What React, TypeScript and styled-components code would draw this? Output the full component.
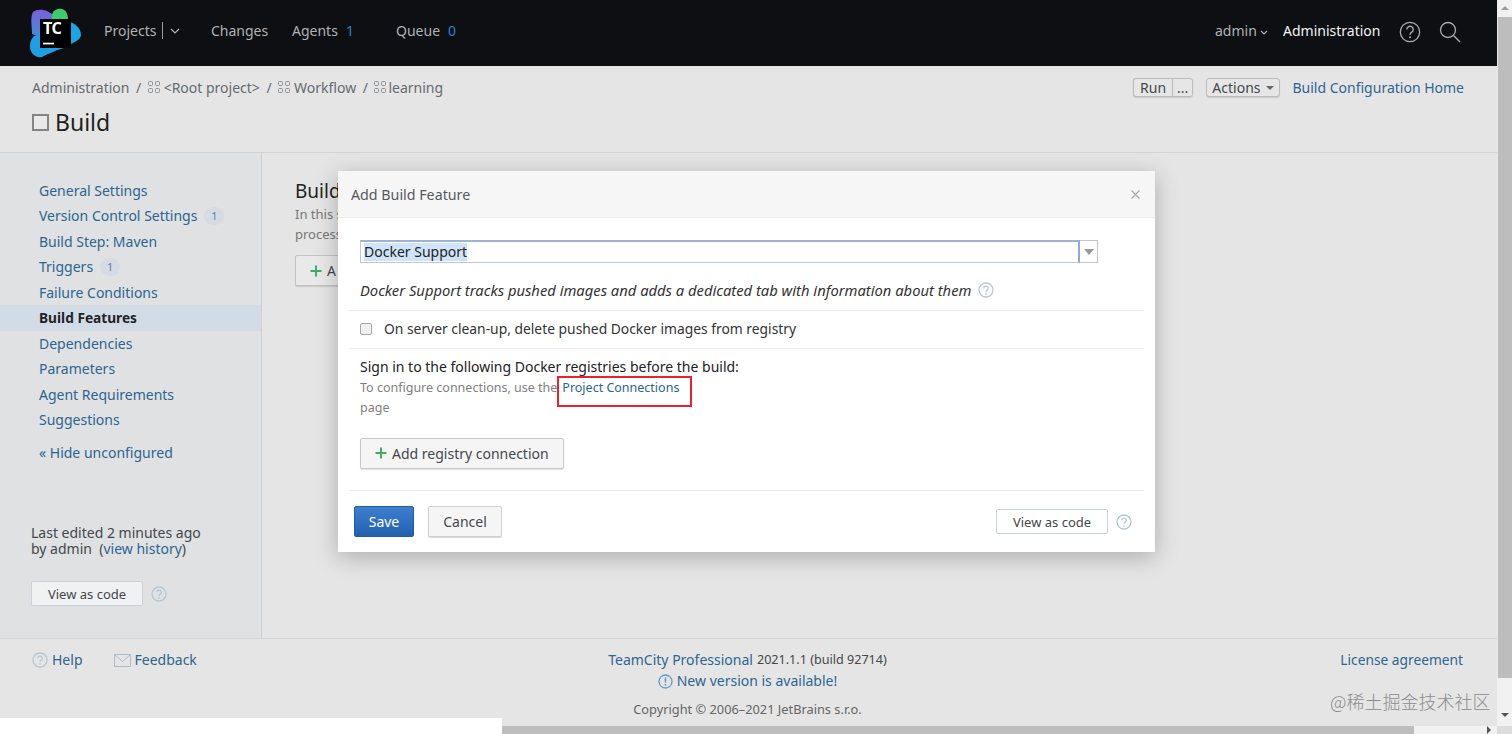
import React from "react";
import styled, { createGlobalStyle } from "styled-components";

const Global = createGlobalStyle`
  html, body { margin: 0; padding: 0; height: 100%; overflow: hidden; background: #e5e5e5; }
  body { font-family: "Noto Sans", "Open Sans", "Liberation Sans", sans-serif; font-size: 14px; color: #333; }
  * { box-sizing: border-box; }
`;

const Screen = styled.div`
  position: relative;
  width: 1512px;
  height: 734px;
  display: flex;
  overflow: hidden;
  background: #e5e5e5;
`;
const Column = styled.div`
  width: 1497px;
  height: 734px;
  display: flex;
  flex-direction: column;
`;
const TopBar = styled.header`
  height: 66px;
  flex: none;
  background: #0d0f13;
  display: flex;
  align-items: center;
  padding: 0 36px 5px 30px;
  color: #b4b6b8;
`;
const Logo = styled.svg`
  width: 52px;
  height: 52px;
  flex: none;
  margin: 7px 22px 0 0;
`;
const NavItem = styled.span<{ $w: number; $light?: boolean }>`
  width: ${(p) => p.$w}px;
  flex: none;
  font-size: 14px;
  line-height: 20px;
  color: ${(p) => (p.$light ? "#f2f2f2" : "#b0b2b4")};
  display: flex;
  align-items: center;
`;
const Count = styled.span`
  color: #2a82d8;
  margin-left: 8px;
  font-size: 14px;
`;
const NavDivider = styled.i`
  width: 1px;
  height: 17px;
  background: #9a9c9e;
  margin: 0 7px 0 6px;
`;
const Spacer = styled.div`
  flex: 1;
`;
const SubHead = styled.div`
  height: 87px;
  flex: none;
  padding: 10px 33px 0 32px;
  border-bottom: 1px solid #d3d4d5;
  background: #e5e5e5;
`;
const CrumbRow = styled.div`
  display: flex;
  align-items: center;
  height: 22px;
`;
const Crumb = styled.span`
  font-size: 14px;
  color: #666b70;
  display: inline-flex;
  align-items: center;
`;
const Slash = styled.span`
  margin: 0 6.5px;
  color: #666b70;
  font-size: 14px;
`;
const TitleRow = styled.div`
  display: flex;
  align-items: center;
  margin-top: 9px;
  height: 30px;
`;
const TitleBox = styled.i`
  width: 17px;
  height: 17px;
  border: 2px solid #848484;
  margin-right: 6px;
  background: #e9e9e9;
`;
const Title = styled.h1`
  margin: 0;
  font-size: 23px;
  line-height: 30px;
  font-weight: 400;
  color: #1f1f1f;
`;
const GroupBtn = styled.span<{ $first?: boolean; $last?: boolean; $ml?: number }>`
  display: inline-flex;
  align-items: center;
  height: 19px;
  padding: 0 ${(p) => (p.$last ? 4 : p.$first ? 6 : 5)}px;
  margin-left: ${(p) => p.$ml ?? 0}px;
  border: 1px solid #bcbcbc;
  border-right-width: ${(p) => (p.$first ? 0 : 1)}px;
  border-radius: ${(p) => (p.$first ? "3px 0 0 3px" : p.$last ? "0 3px 3px 0" : "3px")};
  background: #e6e6e6;
  box-shadow: 0 1px 1px rgba(0, 0, 0, 0.12);
  font-size: 14px;
  color: #44484c;
`;
const DropTri = styled.i`
  width: 0;
  height: 0;
  border: 4px solid transparent;
  border-top: 4px solid #666;
  border-bottom: 0;
  margin-left: 5px;
  margin-top: 1px;
`;
const HeadLink = styled.a`
  color: #2d6591;
  font-size: 14px;
  margin-left: 13px;
`;
const Body = styled.div`
  display: flex;
  flex: none;
  height: 486px;
  border-bottom: 1px solid #d3d4d5;
`;
const Sidebar = styled.aside`
  width: 262px;
  flex: none;
  background: #dfe1e2;
  border-right: 1px solid #cfd1d2;
  display: flex;
  flex-direction: column;
  padding-top: 24.5px;
`;
const SideItem = styled.div<{ $active?: boolean }>`
  height: 25.5px;
  padding-left: 39px;
  display: flex;
  align-items: center;
  font-size: ${(p) => (p.$active ? 13.7 : 14)}px;
  font-weight: ${(p) => (p.$active ? 700 : 400)};
  color: ${(p) => (p.$active ? "#1f2326" : "#2d6591")};
  background: ${(p) => (p.$active ? "#d2dce6" : "transparent")};
`;
const Pill = styled.span`
  width: 20px;
  height: 18px;
  border-radius: 9px;
  background: #d5dbe3;
  color: #65809a;
  font-size: 11px;
  display: inline-flex;
  align-items: center;
  justify-content: center;
  margin-left: 7px;
`;
const HideLink = styled.a`
  color: #2d6591;
  font-size: 14px;
  margin: 7.5px 0 0 39px;
  line-height: 25px;
`;
const EditedNote = styled.div`
  margin: 60px 0 0 31px;
  font-size: 14px;
  line-height: 16px;
  color: #44484c;
`;
const NoteLink = styled.a`
  color: #2d6591;
`;
const CodeRow = styled.div<{ $ml?: number; $mt?: number }>`
  display: flex;
  align-items: center;
  margin-left: ${(p) => p.$ml ?? 0}px;
  margin-top: ${(p) => p.$mt ?? 0}px;
`;
const CodeBtn = styled.span`
  width: 112px;
  height: 25px;
  border: 1px solid #c9d2dc;
  border-radius: 2px;
  background: #f0f1f2;
  display: inline-flex;
  align-items: center;
  justify-content: center;
  font-size: 13px;
  color: #44484c;
`;
const Content = styled.main`
  width: 76px;
  flex: none;
  padding: 25px 0 0 33px;
  overflow: hidden;
`;
const ContentTitle = styled.h2`
  margin: 0;
  font-size: 19px;
  line-height: 26px;
  font-weight: 400;
  color: #222;
  white-space: nowrap;
`;
const ContentText = styled.p`
  margin: 0;
  font-size: 13px;
  line-height: 20px;
  color: #777;
  white-space: nowrap;
`;
const AddBtn = styled.span`
  margin-top: 11px;
  width: 80px;
  height: 31px;
  padding: 0 14px;
  display: inline-flex;
  align-items: center;
  gap: 5px;
  border: 1px solid #c4c4c4;
  border-radius: 2px;
  background: #e9e9e9;
  box-shadow: 0 1px 1px rgba(0, 0, 0, 0.12);
  font-size: 14px;
  color: #44484c;
`;
const Footer = styled.footer`
  flex: none;
  height: 80px;
  display: grid;
  grid-template-columns: 1fr 1fr 1fr;
  padding: 11px 34px 0 32px;
`;
const FootLeft = styled.div`
  display: flex;
  align-items: flex-start;
  gap: 31px;
`;
const FootLink = styled.a<{ $size?: number }>`
  color: #2d6591;
  font-size: ${(p) => p.$size ?? 14}px;
  line-height: 20px;
  display: inline-flex;
  align-items: center;
  gap: 4px;
`;
const FootCenter = styled.div`
  display: flex;
  flex-direction: column;
  align-items: center;
  width: 560px;
  justify-self: center;
`;
const FootLine = styled.div<{ $mt?: number }>`
  margin-top: ${(p) => p.$mt ?? 0}px;
  line-height: 20px;
  font-size: 12.6px;
  color: #44484c;
  display: flex;
  align-items: center;
  gap: 4px;
`;
const Copy = styled.div`
  margin-top: 8px;
  font-size: 12.8px;
  line-height: 20px;
  color: #666;
`;
const FootRight = styled.div`
  text-align: right;
`;
const BottomStrip = styled.div`
  flex: 1;
  display: flex;
  align-items: flex-end;
  min-height: 0;
`;
const WhiteBlock = styled.div`
  width: 502px;
  height: 16px;
  background: #fff;
`;
const HThumb = styled.div`
  width: 912px;
  height: 8px;
  background: #bdbdbd;
`;
const HTrack = styled.div`
  flex: 1;
  height: 8px;
  background: #f1f1f1;
  display: flex;
  justify-content: flex-end;
  align-items: center;
  padding-right: 6px;
`;
const TrackArrow = styled.i`
  width: 0;
  height: 0;
  border-top: 4px solid transparent;
  border-bottom: 4px solid transparent;
  border-left: 4px solid #555;
`;
const VBar = styled.div`
  width: 15px;
  flex: none;
  height: 734px;
  background: #f1f1f1;
  display: flex;
  flex-direction: column;
  align-items: center;
`;
const VArrow = styled.i<{ $down?: boolean }>`
  width: 0;
  height: 0;
  border-left: 4px solid transparent;
  border-right: 4px solid transparent;
  ${(p) => (p.$down ? "border-top: 4px solid #555; margin-top: 35px;" : "border-bottom: 4px solid #9b9b9b; margin-top: 6px;")}
`;
const VThumb = styled.div`
  width: 15px;
  height: 661px;
  margin-top: 7px;
  background: #bdbdbd;
  border-left: 1px solid #e9e9e9;
`;
const VCorner = styled.div`
  width: 15px;
  height: 8px;
  margin-top: auto;
  background: #dcdcdc;
`;
const Watermark = styled.div`
  position: absolute;
  left: 1330px;
  top: 689px;
  font-family: "Noto Sans CJK SC", sans-serif;
  font-size: 18px;
  line-height: 24px;
  font-weight: 300;
  color: #8c8c8c;
  white-space: nowrap;
`;
const Modal = styled.section`
  position: absolute;
  left: 338px;
  top: 171px;
  width: 817px;
  height: 381px;
  background: #fff;
  box-shadow: 0 5px 22px rgba(0, 0, 0, 0.25);
`;
const ModalHead = styled.div`
  height: 47px;
  background: #f6f6f6;
  border-bottom: 1px solid #ececec;
  display: flex;
  align-items: center;
  justify-content: space-between;
  padding: 0 15px 0 13px;
  font-size: 14.25px;
  color: #55595d;
`;
const ModalBody = styled.div`
  padding: 22px 0 0 0;
`;
const SelectRow = styled.div`
  margin-left: 22px;
  width: 738px;
  height: 23px;
  display: flex;
`;
const SelectField = styled.div`
  flex: 1;
  border: 1px solid #b9c9de;
  border-top: 2px solid #9db2d6;
  border-right: 2px solid #8fa9de;
  padding-left: 3px;
  display: flex;
  align-items: center;
`;
const Selected = styled.span`
  background: #cfe4f8;
  font-size: 14px;
  line-height: 18px;
  color: #222;
`;
const SelectArrow = styled.div`
  width: 18px;
  border: 1px solid #c4c4c4;
  border-left: 0;
  display: flex;
  align-items: center;
  justify-content: center;
`;
const SelectTri = styled.i`
  width: 0;
  height: 0;
  border-left: 5px solid transparent;
  border-right: 5px solid transparent;
  border-top: 6px solid #999;
`;
const Desc = styled.div`
  margin: 15px 0 0 22px;
  height: 23px;
  display: flex;
  align-items: center;
  font-size: 14.75px;
  font-style: italic;
  color: #333;
  gap: 7px;
`;
const Rule = styled.hr<{ $mt?: number }>`
  margin: ${(p) => p.$mt ?? 0}px 11px 0 11px;
  border: 0;
  border-top: 1px solid #ececec;
`;
const CheckRow = styled.div`
  height: 37px;
  padding-bottom: 2px;
  display: flex;
  align-items: center;
  margin-left: 22px;
  font-size: 13.85px;
  color: #333;
`;
const Check = styled.i`
  width: 12px;
  height: 12px;
  border: 1px solid #a8a8a8;
  border-radius: 2px;
  background: #f0f0f0;
  margin: 0 12px 0 0;
`;
const SignIn = styled.div`
  margin: 8px 0 0 22px;
  font-size: 14px;
  line-height: 20px;
  color: #222;
`;
const Hint = styled.div`
  margin: 1px 0 0 22px;
  font-size: 12.5px;
  line-height: 20px;
  color: #808080;
  position: relative;
`;
const HintLink = styled.a`
  color: #2d6591;
  margin-left: 5px;
`;
const RedBox = styled.span`
  position: absolute;
  left: 197px;
  top: -2px;
  width: 135px;
  height: 31px;
  border: 2px solid #e8242b;
`;
const AddRegistry = styled.span`
  margin: 20px 0 0 22px;
  width: 204px;
  height: 31px;
  display: flex;
  align-items: center;
  padding: 0 0 1px 14px;
  gap: 5px;
  border: 1px solid #c8c8c8;
  border-radius: 2px;
  background: #f5f5f5;
  box-shadow: 0 1px 1px rgba(0, 0, 0, 0.12);
  font-size: 14px;
  color: #44484c;
`;
const ModalFoot = styled.div`
  display: flex;
  align-items: center;
  padding: 15px 0 0 16px;
`;
const SaveBtn = styled.span`
  width: 60px;
  height: 31px;
  padding-bottom: 1px;
  border: 1px solid #1f5ca8;
  border-radius: 2px;
  background: linear-gradient(#3f7fd0, #2261ae);
  color: #fff;
  font-size: 14px;
  display: inline-flex;
  align-items: center;
  justify-content: center;
`;
const CancelBtn = styled.span`
  width: 74px;
  height: 31px;
  padding-bottom: 1px;
  margin-left: 14px;
  border: 1px solid #d0d0d0;
  border-radius: 2px;
  background: #f5f5f5;
  box-shadow: 0 1px 1px rgba(0, 0, 0, 0.15);
  color: #44484c;
  font-size: 14px;
  display: inline-flex;
  align-items: center;
  justify-content: center;
`;
const ModalCode = styled(CodeBtn)`
  background: #fff;
  margin-left: auto;
`;
const HelpWrap = styled.span<{ $ml: number; $mr?: number }>`
  display: inline-flex;
  margin-left: ${(p) => p.$ml}px;
  margin-right: ${(p) => p.$mr ?? 0}px;
`;

const Grid = ({ c = "#8a8f94", gap = 4 }: { c?: string; gap?: number }) => (
  <svg width="12" height="12" viewBox="0 0 12 12" style={{ marginRight: gap }}>
    {[0, 7].map((x) => [0, 7].map((y) => <rect key={`${x}${y}`} x={x + 0.5} y={y + 0.5} width="4" height="4" rx="1" fill="none" stroke={c} />))}
  </svg>
);
const Help = ({ size = 16, c = "#b8c6d4" }: { size?: number; c?: string }) => (
  <svg width={size} height={size} viewBox="0 0 16 16">
    <circle cx="8" cy="8" r="7" fill="none" stroke={c} strokeWidth="1.3" />
    <path d="M5.8 6.3a2.2 2.2 0 1 1 3.4 1.8c-.8.5-1.2.9-1.2 1.7" fill="none" stroke={c} strokeWidth="1.3" />
    <circle cx="8" cy="11.8" r=".9" fill={c} />
  </svg>
);
const Plus = () => (
  <svg width="12" height="12" viewBox="0 0 12 12">
    <path d="M6 0.5v11M0.5 6h11" stroke="#3fae62" strokeWidth="2" />
  </svg>
);

const sideItems: { t: string; n?: number; a?: boolean }[] = [
  { t: "General Settings" },
  { t: "Version Control Settings", n: 1 },
  { t: "Build Step: Maven" },
  { t: "Triggers", n: 1 },
  { t: "Failure Conditions" },
  { t: "Build Features", a: true },
  { t: "Dependencies" },
  { t: "Parameters" },
  { t: "Agent Requirements" },
  { t: "Suggestions" },
];

export default function App() {
  return (
    <Screen>
      <Global />
      <Column>
        <TopBar>
          <Logo viewBox="0 0 52 52">
            <defs>
              <linearGradient id="tcg" x1="0" y1="0" x2="0" y2="1">
                <stop offset="0" stopColor="#7b5fd6" />
                <stop offset="1" stopColor="#3f8fe0" />
              </linearGradient>
            </defs>
            <path d="M3 4C8 0 18 1 24 8L24 14 12 30 2 26C2 18 0 10 3 4z" fill="url(#tcg)" />
            <path d="M22 8C22 2 28 0 32 1 36 2 38 6 38 12L22 12z" fill="#3ecb6c" />
            <path d="M38 14C44 14 51 20 51 27 51 31 44 35 38 37z" fill="#19a5e6" />
            <path d="M4 28C10 26 20 30 34 40 26 42 18 46 12 49 6 50 0 46 0 38 0 33 2 30 4 28z" fill="#1ea0e4" />
            <rect x="10" y="11" width="31" height="29" fill="#000" />
            <path d="M13 34.7h11v1.7H13z" fill="#fff" />
            <text x="13" y="26.3" fontFamily="Noto Sans, sans-serif" fontWeight="700" fontSize="16" fill="#fff" letterSpacing="-0.5">TC</text>
          </Logo>
          <NavItem $w={107}>
            Projects<NavDivider />
            <svg width="10" height="6" viewBox="0 0 10 6"><path d="M1 1l4 4 4-4" fill="none" stroke="#b0b2b4" strokeWidth="1.2" /></svg>
          </NavItem>
          <NavItem $w={81}>Changes</NavItem>
          <NavItem $w={104}>Agents<Count>1</Count></NavItem>
          <NavItem $w={100}>Queue<Count>0</Count></NavItem>
          <Spacer />
          <NavItem $w={68}>
            admin
            <svg width="8" height="5" viewBox="0 0 8 5" style={{ marginLeft: 3, marginTop: 3 }}><path d="M1 1l3 3 3-3" fill="none" stroke="#b0b2b4" strokeWidth="1.2" /></svg>
          </NavItem>
          <NavItem $w={116} $light>Administration</NavItem>
          <svg width="22" height="22" viewBox="0 0 22 22" style={{ marginTop: 2 }}>
            <circle cx="11" cy="11" r="9.7" fill="none" stroke="#a8aaac" strokeWidth="1.3" />
            <path d="M7.8 8.6a3.2 3.2 0 1 1 5 2.6c-1.2.8-1.8 1.3-1.8 2.6" fill="none" stroke="#a8aaac" strokeWidth="1.4" />
            <circle cx="11" cy="16.2" r="1" fill="#a8aaac" />
          </svg>
          <svg width="22" height="22" viewBox="0 0 22 22" style={{ marginLeft: 18, marginTop: 2 }}>
            <circle cx="9" cy="9" r="7.5" fill="none" stroke="#a8aaac" strokeWidth="1.3" />
            <path d="M14.5 14.5L21 21" stroke="#a8aaac" strokeWidth="1.4" />
          </svg>
        </TopBar>
        <SubHead>
          <CrumbRow>
            <Crumb>Administration</Crumb><Slash>/</Slash>
            <Crumb><Grid />&lt;Root project&gt;</Crumb><Slash>/</Slash>
            <Crumb><Grid />Workflow</Crumb><Slash>/</Slash>
            <Crumb><Grid gap={2} />learning</Crumb>
            <Spacer />
            <GroupBtn $first>Run</GroupBtn>
            <GroupBtn $last>...</GroupBtn>
            <GroupBtn $ml={13}>Actions<DropTri /></GroupBtn>
            <HeadLink>Build Configuration Home</HeadLink>
          </CrumbRow>
          <TitleRow>
            <TitleBox />
            <Title>Build</Title>
          </TitleRow>
        </SubHead>
        <Body>
          <Sidebar>
            {sideItems.map((s) => (
              <SideItem key={s.t} $active={s.a}>
                {s.t}
                {s.n ? <Pill>{s.n}</Pill> : null}
              </SideItem>
            ))}
            <HideLink>« Hide unconfigured</HideLink>
            <EditedNote>
              Last edited 2 minutes ago
              <br />
              by admin&nbsp; (<NoteLink>view history</NoteLink>)
            </EditedNote>
            <CodeRow $ml={31} $mt={24}>
              <CodeBtn>View as code</CodeBtn>
              <HelpWrap $ml={8}><Help /></HelpWrap>
            </CodeRow>
          </Sidebar>
          <Content>
            <ContentTitle>Build</ContentTitle>
            <ContentText>In this s</ContentText>
            <ContentText>process</ContentText>
            <AddBtn><Plus />A</AddBtn>
          </Content>
        </Body>
        <Footer>
          <FootLeft>
            <FootLink><Help /> Help</FootLink>
            <FootLink>
              <svg width="17" height="13" viewBox="0 0 17 13"><rect x=".5" y=".5" width="16" height="12" fill="none" stroke="#a9bccd" /><path d="M.5.5l8 7 8-7" fill="none" stroke="#a9bccd" /></svg>
              Feedback
            </FootLink>
          </FootLeft>
          <FootCenter>
            <FootLine><FootLink>TeamCity Professional</FootLink> 2021.1.1 (build 92714)</FootLine>
            <FootLine $mt={1}>
              <svg width="15" height="15" viewBox="0 0 15 15"><circle cx="7.5" cy="7.5" r="6.5" fill="none" stroke="#5f9bc8" strokeWidth="1.3" /><path d="M7.5 3.5v5M7.5 10v1.5" stroke="#5f9bc8" strokeWidth="1.6" /></svg>
              <FootLink>New version is available!</FootLink>
            </FootLine>
            <Copy>Copyright © 2006–2021 JetBrains s.r.o.</Copy>
          </FootCenter>
          <FootRight><FootLink $size={13.75}>License agreement</FootLink></FootRight>
        </Footer>
        <BottomStrip>
          <WhiteBlock />
          <HThumb />
          <HTrack><TrackArrow /></HTrack>
        </BottomStrip>
      </Column>
      <VBar>
        <VArrow />
        <VThumb />
        <VArrow $down />
        <VCorner />
      </VBar>
      <Watermark>@稀土掘金技术社区</Watermark>
      <Modal>
        <ModalHead>
          Add Build Feature
          <svg width="9" height="9" viewBox="0 0 9 9"><path d="M.5.5l8 8M8.5.5l-8 8" stroke="#a8a8a8" strokeWidth="1.1" /></svg>
        </ModalHead>
        <ModalBody>
          <SelectRow>
            <SelectField><Selected>Docker Support</Selected></SelectField>
            <SelectArrow><SelectTri /></SelectArrow>
          </SelectRow>
          <Desc>
            Docker Support tracks pushed images and adds a dedicated tab with information about them
            <Help />
          </Desc>
          <Rule $mt={9} />
          <CheckRow><Check />On server clean-up, delete pushed Docker images from registry</CheckRow>
          <Rule />
          <SignIn>Sign in to the following Docker registries before the build:</SignIn>
          <Hint>
            To configure connections, use the<HintLink>Project Connections</HintLink>
            <RedBox />
            <br />
            page
          </Hint>
          <AddRegistry><Plus />Add registry connection</AddRegistry>
          <Rule $mt={21} />
          <ModalFoot>
            <SaveBtn>Save</SaveBtn>
            <CancelBtn>Cancel</CancelBtn>
            <ModalCode>View as code</ModalCode>
            <HelpWrap $ml={8} $mr={23}><Help /></HelpWrap>
          </ModalFoot>
        </ModalBody>
      </Modal>
    </Screen>
  );
}
